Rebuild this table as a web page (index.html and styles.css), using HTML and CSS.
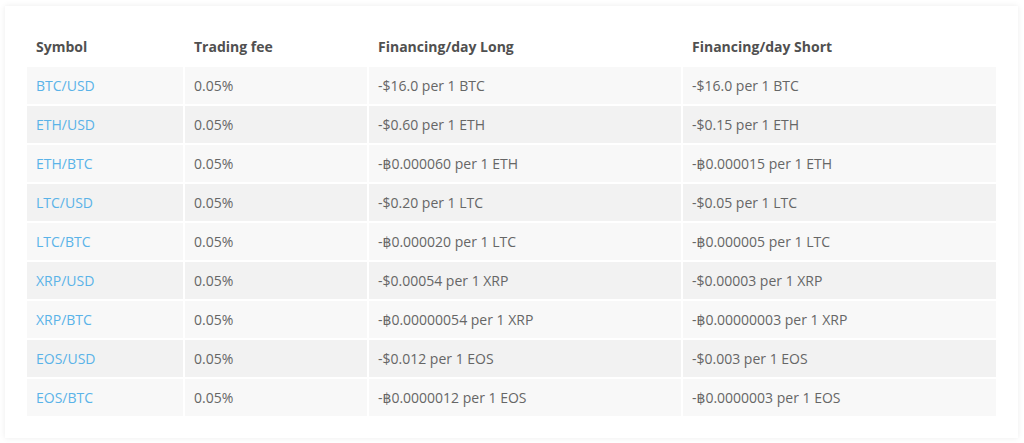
FILE: index.html
```html
<!DOCTYPE html>
<html lang="en">
<head>
<meta charset="utf-8">
<title>Fees</title>
<link rel="stylesheet" href="styles.css">
</head>
<body>
<div class="card">
  <table class="fees">
    <colgroup>
      <col class="c1"><col class="c2"><col class="c3"><col class="c4">
    </colgroup>
    <thead>
      <tr><th>Symbol</th><th>Trading fee</th><th>Financing/day Long</th><th>Financing/day Short</th></tr>
    </thead>
    <tbody>
      <tr><td><a href="#">BTC/USD</a></td><td>0.05%</td><td>-$16.0 per 1 BTC</td><td>-$16.0 per 1 BTC</td></tr>
      <tr><td><a href="#">ETH/USD</a></td><td>0.05%</td><td>-$0.60 per 1 ETH</td><td>-$0.15 per 1 ETH</td></tr>
      <tr><td><a href="#">ETH/BTC</a></td><td>0.05%</td><td>-฿0.000060 per 1 ETH</td><td>-฿0.000015 per 1 ETH</td></tr>
      <tr><td><a href="#">LTC/USD</a></td><td>0.05%</td><td>-$0.20 per 1 LTC</td><td>-$0.05 per 1 LTC</td></tr>
      <tr><td><a href="#">LTC/BTC</a></td><td>0.05%</td><td>-฿0.000020 per 1 LTC</td><td>-฿0.000005 per 1 LTC</td></tr>
      <tr><td><a href="#">XRP/USD</a></td><td>0.05%</td><td>-$0.00054 per 1 XRP</td><td>-$0.00003 per 1 XRP</td></tr>
      <tr><td><a href="#">XRP/BTC</a></td><td>0.05%</td><td>-฿0.00000054 per 1 XRP</td><td>-฿0.00000003 per 1 XRP</td></tr>
      <tr><td><a href="#">EOS/USD</a></td><td>0.05%</td><td>-$0.012 per 1 EOS</td><td>-$0.003 per 1 EOS</td></tr>
      <tr><td><a href="#">EOS/BTC</a></td><td>0.05%</td><td>-฿0.0000012 per 1 EOS</td><td>-฿0.0000003 per 1 EOS</td></tr>
    </tbody>
  </table>
</div>
</body>
</html>
```

FILE: styles.css
```css
html, body {
  margin: 0;
  padding: 0;
  background: #ffffff;
}

body {
  font-family: "Open Sans", "DejaVu Sans", sans-serif;
  font-size: 14px;
  color: #666666;
}

.card {
  margin: 6px 6px 6px 5px;
  padding: 20px;
  background: #ffffff;
  box-shadow: 0 0 6px rgba(0, 0, 0, 0.08);
}

.fees {
  width: 100%;
  border-collapse: separate;
  border-spacing: 2px;
  table-layout: fixed;
}

.c1 { width: 156px; }
.c2 { width: 182px; }
.c3 { width: 312px; }
.c4 { width: auto; }

.fees th,
.fees td {
  height: 37px;
  padding: 0 9px;
  text-align: left;
  vertical-align: middle;
  white-space: nowrap;
}

.fees th {
  font-weight: 700;
  color: #505050;
}

.fees td {
  color: #666666;
}

.fees tbody tr:nth-child(odd) td {
  background: #f8f8f8;
}

.fees tbody tr:nth-child(even) td {
  background: #f2f2f2;
}

.fees a {
  color: #5ab3e8;
  text-decoration: none;
}
```
